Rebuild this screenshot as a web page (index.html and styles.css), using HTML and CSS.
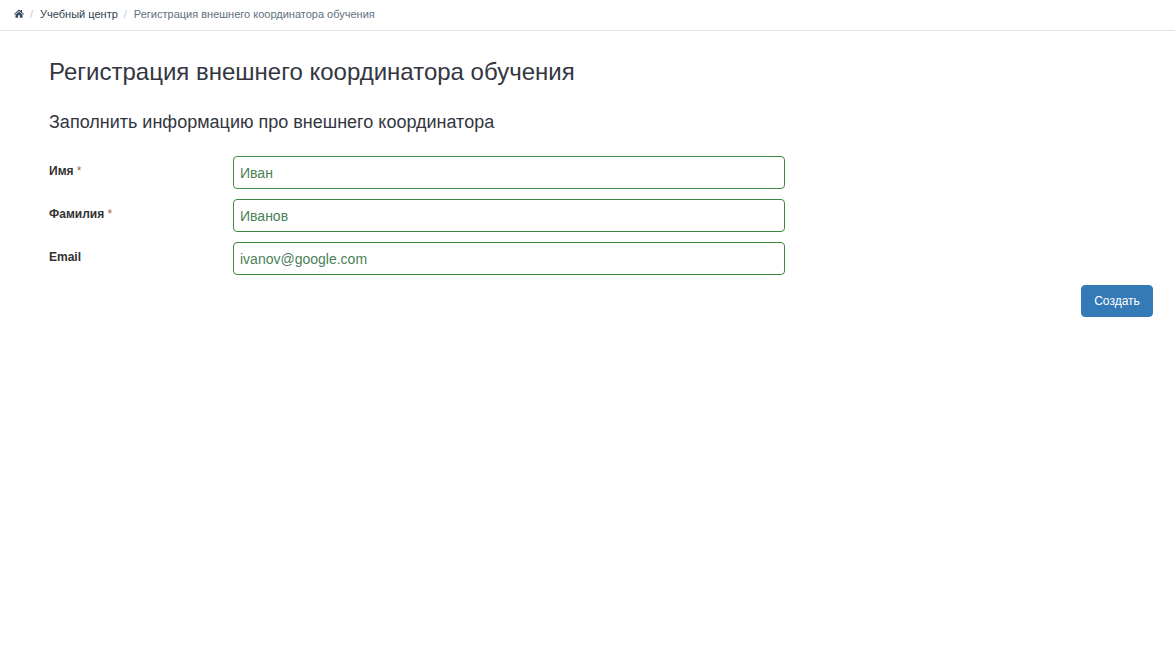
FILE: index.html
```html
<!DOCTYPE html>
<html lang="ru">
<head>
<meta charset="utf-8">
<title>Регистрация внешнего координатора обучения</title>
<link rel="stylesheet" href="styles.css">
</head>
<body>
<nav class="crumbs">
  <a class="crumb-home" href="#" aria-label="Главная"><svg width="10" height="9" viewBox="0 0 20 17"><path d="M10 0.5 L13.4 3.6 V1.6 H16 V6 L20 9.6 L18.8 11 L10 3.3 L1.2 11 L0 9.6 Z M10 4.8 L17 10.9 V17 H11.8 V12.2 H8.2 V17 H3 V10.9 Z" fill="#34495e"/></svg></a>
  <span class="sep">/</span>
  <a class="crumb-link" href="#">Учебный центр</a>
  <span class="sep">/</span>
  <span class="crumb-current">Регистрация внешнего координатора обучения</span>
</nav>
<main class="page">
  <h1 class="title">Регистрация внешнего координатора обучения</h1>
  <h2 class="subtitle">Заполнить информацию про внешнего координатора</h2>
  <form class="form">
    <div class="row">
      <label class="label">Имя <span class="req">*</span></label>
      <input class="field" type="text" value="Иван">
    </div>
    <div class="row">
      <label class="label">Фамилия <span class="req">*</span></label>
      <input class="field" type="text" value="Иванов">
    </div>
    <div class="row">
      <label class="label">Email</label>
      <input class="field" type="text" value="ivanov@google.com">
    </div>
    <div class="actions">
      <button class="btn" type="button">Создать</button>
    </div>
  </form>
</main>
</body>
</html>
```
FILE: styles.css
```css
* { box-sizing: border-box; }
html, body { margin: 0; padding: 0; background: #fff; }
body {
  font-family: "Liberation Sans", Arial, sans-serif;
  font-size: 14px;
  color: #333;
  height: 656px;
  overflow: hidden;
}
.crumbs {
  display: flex;
  align-items: center;
  height: 31px;
  padding: 0 0 3px 14px;
  border-bottom: 1px solid #dde3ea;
  font-size: 11px;
}
.crumb-home { display: flex; }
.sep { color: #c4ccd4; margin: 0 7px 0 6px; }
.crumb-link { color: #2c3e50; text-decoration: none; }
.crumb-current { color: #5f6f7f; }
.page { padding: 0 22px 0 49px; }
.title {
  margin: 27px 0 0;
  font-size: 24px;
  line-height: 28px;
  font-weight: 400;
  color: #33363f;
}
.subtitle {
  margin: 26px 0 0;
  font-size: 18px;
  line-height: 20px;
  font-weight: 400;
  color: #33363f;
}
.form { margin-top: 24px; }
.row {
  display: flex;
  align-items: flex-start;
  margin-bottom: 10px;
}
.label {
  width: 184px;
  flex: none;
  padding-top: 7px;
  font-size: 12px;
  line-height: 16px;
  font-weight: 700;
  color: #333;
}
.req { color: #a5673f; font-weight: 400; }
.field {
  width: 552px;
  height: 33px;
  padding: 0 6px;
  border: 1px solid #3c8a40;
  border-radius: 4px;
  background: #fff;
  font-family: inherit;
  font-size: 14px;
  color: #4b7f57;
  outline: none;
}
.actions { display: flex; justify-content: flex-end; }
.btn {
  width: 72px;
  height: 32px;
  padding: 0;
  border: 1px solid #337ab7;
  border-radius: 4px;
  background: #337ab7;
  color: #fff;
  font-family: inherit;
  font-size: 12px;
}
```
